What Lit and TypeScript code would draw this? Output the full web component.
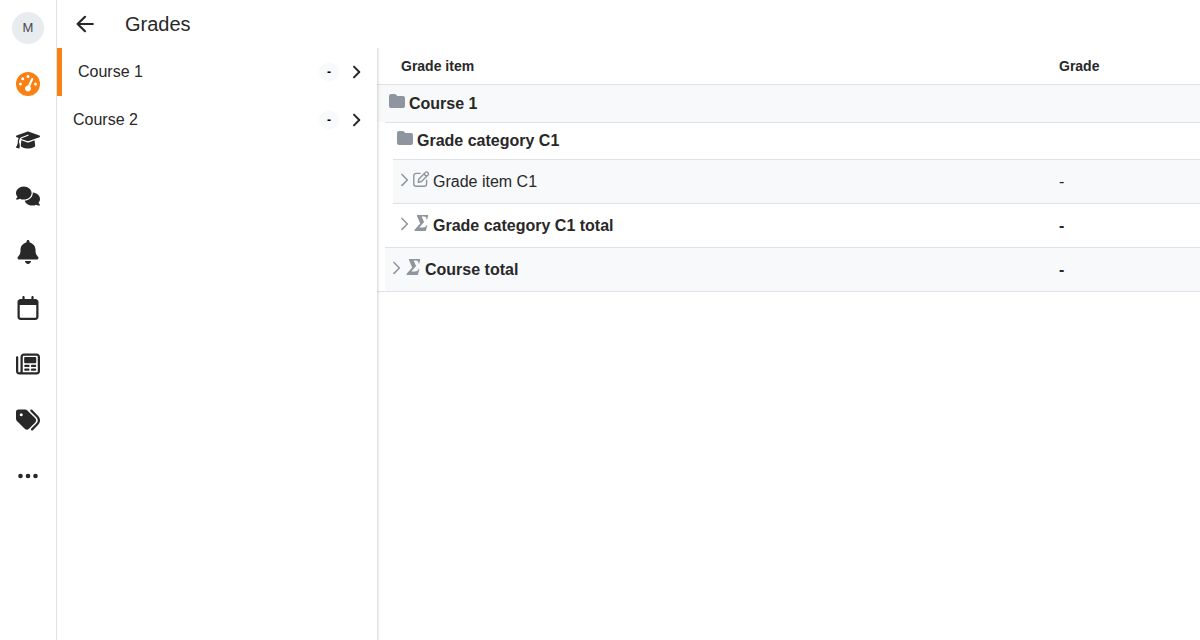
import { LitElement, html, css, svg, nothing } from "lit";
import { customElement, property, state } from "lit/decorators.js";
import { classMap } from "lit/directives/class-map.js";

const icons = {
  dashboard: { box: "0 0 512 512", art: svg`<path d="M0 256a256 256 0 1 1 512 0A256 256 0 1 1 0 256zM288 96a32 32 0 1 0 -64 0 32 32 0 1 0 64 0zM256 416c35.3 0 64-28.7 64-64c0-17.4-6.9-33.1-18.1-44.6L366 161.7c5.3-12.1-.2-26.3-12.3-31.6s-26.3 .2-31.6 12.3L257.9 288c-.6 0-1.3 0-1.9 0c-35.3 0-64 28.7-64 64s28.7 64 64 64zM176 144a32 32 0 1 0 -64 0 32 32 0 1 0 64 0zM96 288a32 32 0 1 0 0-64 32 32 0 1 0 0 64zm352-32a32 32 0 1 0 -64 0 32 32 0 1 0 64 0z"/>` },
  courses: { box: "0 0 640 512", art: svg`<path d="M320 32c-8.1 0-16.1 1.4-23.7 4.1L15.8 137.4C6.3 140.9 0 149.9 0 160s6.3 19.1 15.8 22.6l57.9 20.9C57.3 229.3 48 259.8 48 291.9v28.1c0 28.4-10.8 57.7-22.3 80.8c-6.5 13-13.9 25.8-22.5 37.6C0 442.7-.9 448.3 .9 453.4s6 8.9 11.2 10.2l64 16c4.2 1.1 8.7 .3 12.4-2s6.3-6.1 7.1-10.4c8.6-42.8 4.3-81.2-2.1-108.7C90.3 344.3 86 329.8 80 316.5V291.9c0-30.2 10.2-58.7 27.9-81.5c12.9-15.5 29.6-28 49.2-35.7l157-61.7c8.2-3.2 17.5 .8 20.7 9s-.8 17.5-9 20.7l-157 61.7c-12.4 4.9-23.3 12.4-32.2 21.6l159.6 57.6c7.6 2.7 15.6 4.1 23.7 4.1s16.1-1.4 23.7-4.1L624.2 182.6c9.5-3.4 15.8-12.5 15.8-22.6s-6.3-19.1-15.8-22.6L343.7 36.1C336.1 33.4 328.1 32 320 32zM128 408c0 35.3 86 72 192 72s192-36.7 192-72L496.7 262.6 354.5 314c-11.1 4-22.8 6-34.5 6s-23.5-2-34.5-6L143.3 262.6 128 408z"/>` },
  messages: { box: "0 0 640 512", art: svg`<path d="M208 352c114.9 0 208-78.8 208-176S322.9 0 208 0S0 78.8 0 176c0 38.6 14.7 74.3 39.6 103.4c-3.5 9.4-8.7 17.7-14.2 24.7c-4.8 6.2-9.7 11-13.3 14.3c-1.8 1.6-3.3 2.9-4.3 3.7c-.5 .4-.9 .7-1.1 .8l-.2 .2C1 327.2-1.4 334.4 .8 340.9S9.1 352 16 352c21.8 0 43.8-5.6 62.1-12.5c9.2-3.5 17.8-7.4 25.2-11.4C134.1 343.3 169.8 352 208 352zM448 176c0 112.3-99.1 196.9-216.5 207C255.8 457.4 336.4 512 432 512c38.2 0 73.9-8.7 104.7-23.9c7.5 4 16 7.9 25.2 11.4c18.3 6.9 40.3 12.5 62.1 12.5c6.9 0 13.1-4.5 15.2-11.1c2.1-6.6-.2-13.8-5.8-17.9l-.2-.2c-.2-.2-.6-.4-1.1-.8c-1-.8-2.5-2-4.3-3.7c-3.6-3.3-8.5-8.1-13.3-14.3c-5.5-7-10.7-15.4-14.2-24.7c24.9-29 39.6-64.7 39.6-103.4c0-92.8-84.9-168.9-192.6-175.5c.4 5.1 .6 10.3 .6 15.5z"/>` },
  notifications: { box: "0 0 448 512", art: svg`<path d="M224 0c-17.7 0-32 14.3-32 32V51.2C119 66 64 130.6 64 208v18.8c0 47-17.3 92.4-48.5 127.6l-7.4 8.3c-8.4 9.4-10.4 22.9-5.3 34.4S19.4 416 32 416H416c12.6 0 24-7.4 29.2-18.9s3.1-25-5.3-34.4l-7.4-8.3C401.3 319.2 384 273.9 384 226.8V208c0-77.4-55-142-128-156.8V32c0-17.7-14.3-32-32-32zm45.3 493.3c12-12 18.7-28.3 18.7-45.3H224 160c0 17 6.7 33.3 18.7 45.3s28.3 18.7 45.3 18.7s33.3-6.7 45.3-18.7z"/>` },
  calendar: { box: "0 0 448 512", art: svg`<path d="M152 24c0-13.3-10.7-24-24-24s-24 10.7-24 24V64H64C28.7 64 0 92.7 0 128v16 48V448c0 35.3 28.7 64 64 64H384c35.3 0 64-28.7 64-64V192 144 128c0-35.3-28.7-64-64-64H344V24c0-13.3-10.7-24-24-24s-24 10.7-24 24V64H152V24zM48 192H400V448c0 8.8-7.2 16-16 16H64c-8.8 0-16-7.2-16-16V192z"/>` },
  news: { box: "0 0 512 512", art: svg`<path d="M168 80c-13.3 0-24 10.7-24 24V408c0 8.4-1.4 16.5-4.1 24H440c13.3 0 24-10.7 24-24V104c0-13.3-10.7-24-24-24H168zM72 480c-39.8 0-72-32.2-72-72V112C0 98.7 10.7 88 24 88s24 10.7 24 24V408c0 13.3 10.7 24 24 24s24-10.7 24-24V104c0-39.8 32.2-72 72-72H440c39.8 0 72 32.2 72 72V408c0 39.8-32.2 72-72 72H72z"/><rect x="174" y="106" width="258" height="134" rx="22"/><rect x="174" y="272" width="116" height="48" rx="24"/><rect x="316" y="272" width="116" height="48" rx="24"/><rect x="174" y="352" width="116" height="48" rx="24"/><rect x="316" y="352" width="116" height="48" rx="24"/>` },
  tags: { box: "0 0 512 512", art: svg`<path d="M345 39.1L472.8 168.4c52.4 53 52.4 138.2 0 191.2L360.8 472.9c-9.3 9.4-24.5 9.5-33.9 .2s-9.5-24.5-.2-33.9L438.6 325.9c33.9-34.3 33.9-89.4 0-123.7L310.9 72.9c-9.3-9.4-9.2-24.6 .2-33.9s24.6-9.2 33.9 .2zM0 229.5V80C0 53.5 21.5 32 48 32H197.5c17 0 33.3 6.7 45.3 18.7l168 168c25 25 25 65.5 0 90.5L277.3 442.7c-25 25-65.5 25-90.5 0l-168-168C6.7 262.7 0 246.5 0 229.5zM144 144a32 32 0 1 0 -64 0 32 32 0 1 0 64 0z"/>` },
  more: { box: "0 0 24 24", art: svg`<circle cx="4.5" cy="12" r="2.3"/><circle cx="12" cy="12" r="2.3"/><circle cx="19.5" cy="12" r="2.3"/>` },
  back: { box: "0 0 24 24", art: svg`<path class="line" stroke-width="2.2" d="M12 4.8L4.6 12l7.400 7.200M4.600 12H19.800"/>` },
  next: { box: "0 0 16 16", art: svg`<path class="line" stroke-width="2" d="M5 2.600L10.300 8 5 13.400"/>` },
  expand: { box: "0 0 8 16", art: svg`<path class="line" stroke-width="1.5" d="M1 3.400L6.400 9 1 14.400"/>` },
  folder: { box: "0 0 16 16", art: svg`<path d="M2 1h3.6c.5 0 1 .2 1.4.6l.8.8c.4.4.9.6 1.4.6H14a2 2 0 0 1 2 2v8a2 2 0 0 1-2 2H2a2 2 0 0 1-2-2V3a2 2 0 0 1 2-2z"/>` },
  edit: { box: "0 0 16 16", art: svg`<path class="line" stroke-width="1.4" d="M7 2.4H3A2.2 2.2 0 0 0 .8 4.6V13A2.2 2.2 0 0 0 3 15.200h8.400A2.200 2.200 0 0 0 13.600 13V9.200M5.200 11.200l.7-3.300 6.500-6.500a1.500 1.500 0 0 1 2.200 0l.4.4a1.500 1.500 0 0 1 0 2.200L8.500 10.500zM10.900 2.900l2.600 2.600"/>` },
  sum: { box: "0 0 16 16", art: svg`<path d="M4 0H15.200l-.9 4.600h-.7C13.500 2.600 12.900 1.600 10.700 1.600H8.600l2.500 5.300-4.800 5.600h3.500c2 0 3-.7 3.900-2.500h.7L12.800 16H1.600v-1.200l5.600-6.200L4 1z"/>` },
};

type IconName = keyof typeof icons;

@customElement("grade-icon")
class GradeIcon extends LitElement {
  static styles = css`
    :host { display: inline-block; flex: none; }
    svg { display: block; width: 100%; height: 100%; fill: currentColor; }
    .line { fill: none; stroke: currentColor; stroke-linecap: round; stroke-linejoin: round; }
  `;
  @property() name: IconName = "more";
  render() {
    const icon = icons[this.name];
    return html`<svg viewBox=${icon.box} aria-hidden="true">${icon.art}</svg>`;
  }
}

const sections: { icon: IconName; label: string }[] = [
  { icon: "dashboard", label: "Dashboard" },
  { icon: "courses", label: "My courses" },
  { icon: "messages", label: "Messages" },
  { icon: "notifications", label: "Notifications" },
  { icon: "calendar", label: "Calendar" },
  { icon: "news", label: "Site news" },
  { icon: "tags", label: "Tags" },
  { icon: "more", label: "More" },
];

@customElement("app-root")
class AppRoot extends LitElement {
  static styles = css`
    :host {
      display: flex;
      min-height: 100vh;
      background: #fff;
      color: #282828;
      font: 16px/24px "Liberation Sans", Arial, sans-serif;
      --accent: #f98012;
      --line: #dee2e6;
      --soft: #f8f9fa;
      --muted: #8f959e;
    }
    * { box-sizing: border-box; }
    button { border: 0; padding: 0; background: none; color: inherit; font: inherit; cursor: pointer; }
    .rail { display: flex; flex: none; flex-direction: column; width: 57px; border-right: 1px solid var(--line); }
    .rail button { display: flex; align-items: center; justify-content: center; height: 56px; }
    .rail grade-icon { width: 24px; height: 24px; }
    .rail .current { color: var(--accent); }
    .avatar { width: 32px; height: 32px; border-radius: 50%; background: #e9ecef; color: #494949; font-size: 13px; line-height: 32px; }
    .page { display: flex; flex: 1; flex-direction: column; min-width: 0; }
    .bar { display: flex; align-items: center; gap: 28px; height: 48px; padding: 0 16px; }
    .bar button { display: flex; }
    .bar grade-icon { width: 24px; height: 24px; }
    h1 { margin: 0; font-size: 20px; font-weight: 400; line-height: 24px; }
    .split { display: flex; flex: 1; min-height: 0; }
    .courses { flex: none; width: 320px; }
    .course { display: flex; align-items: center; width: 100%; height: 48px; padding: 0 12px 0 16px; text-align: left; }
    .course.selected { border-left: 5px solid var(--accent); }
    .course .name { flex: 1; }
    .badge { min-width: 20px; margin-right: 10px; border-radius: 9px; background: var(--soft); color: #000; font-size: 12px; font-weight: 700; line-height: 18px; text-align: center; }
    .course grade-icon { width: 16px; height: 16px; }
    .detail { position: relative; flex: 1; min-width: 0; }
    .detail::before {
      content: "";
      position: absolute;
      inset: 0 auto 0 0;
      width: 4px;
      background: linear-gradient(to right, rgba(0, 0, 0, 0.14), rgba(0, 0, 0, 0.03) 50%, transparent);
      pointer-events: none;
    }
    table { width: 100%; border-spacing: 0; table-layout: fixed; border-bottom: 1px solid var(--line); }
    .indent { width: 8px; }
    .grade-col { width: 157px; }
    th, td { padding: 0; text-align: left; font-weight: 400; }
    thead th { height: 36px; font-size: 14px; font-weight: 700; line-height: 20px; }
    thead .item-head { padding-left: 24px; }
    .grade, thead .grade-head { padding-left: 16px; }
    tbody th, .grade { height: 44px; border-top: 1px solid var(--line); }
    .strong { font-weight: 700; }
    .shaded { background: #f8f9fb; }
    tbody .group { height: 38px; padding-left: 12px; }
    tbody .subgroup { height: 37px; }
    .item { padding-left: 8px; }
    tbody grade-icon { width: 16px; height: 16px; margin-right: 4px; color: var(--muted); }
    .toggle { display: inline-block; }
    .toggle .chevron { width: 8px; }
  `;

  @state() private selected = 0;

  private itemCell(name: string, icon: IconName, span: number, strong: boolean, shaded: boolean) {
    return html`
      <th scope="row" colspan=${span} class=${classMap({ item: true, strong, shaded })}>
        <button class="toggle"><grade-icon class="chevron" name="expand"></grade-icon><grade-icon name=${icon}></grade-icon>${name}</button>
      </th>
      <td class=${classMap({ grade: true, strong, shaded })}>-</td>`;
  }

  render() {
    return html`
      <nav class="rail" aria-label="Main">
        <button aria-label="User account"><span class="avatar">M</span></button>
        ${sections.map((s, i) => html`
          <button class=${i === 0 ? "current" : ""} aria-label=${s.label}><grade-icon name=${s.icon}></grade-icon></button>`)}
      </nav>
      <div class="page">
        <header class="bar">
          <button aria-label="Back"><grade-icon name="back"></grade-icon></button>
          <h1>Grades</h1>
        </header>
        <div class="split">
          <aside class="courses">
            ${["Course 1", "Course 2"].map((name, i) => html`
              <button class=${classMap({ course: true, selected: i === this.selected })}
                aria-current=${i === this.selected ? "true" : nothing} @click=${() => (this.selected = i)}>
                <span class="name">${name}</span>
                <span class="badge">-</span>
                <grade-icon name="next"></grade-icon>
              </button>`)}
          </aside>
          <main class="detail">
            <table>
              <colgroup><col class="indent"><col class="indent"><col><col class="grade-col"></colgroup>
              <thead>
                <tr><th scope="col" colspan="3" class="item-head">Grade item</th><th scope="col" class="grade-head">Grade</th></tr>
              </thead>
              <tbody>
                <tr><th scope="rowgroup" colspan="4" class="group strong shaded"><grade-icon name="folder"></grade-icon>Course 1</th></tr>
                <tr><td rowspan="4"></td><th scope="rowgroup" colspan="3" class="group subgroup strong"><grade-icon name="folder"></grade-icon>Grade category C1</th></tr>
                <tr><td rowspan="2"></td>${this.itemCell("Grade item C1", "edit", 1, false, true)}</tr>
                <tr>${this.itemCell("Grade category C1 total", "sum", 1, true, false)}</tr>
                <tr>${this.itemCell("Course total", "sum", 2, true, true)}</tr>
              </tbody>
            </table>
          </main>
        </div>
      </div>`;
  }
}
